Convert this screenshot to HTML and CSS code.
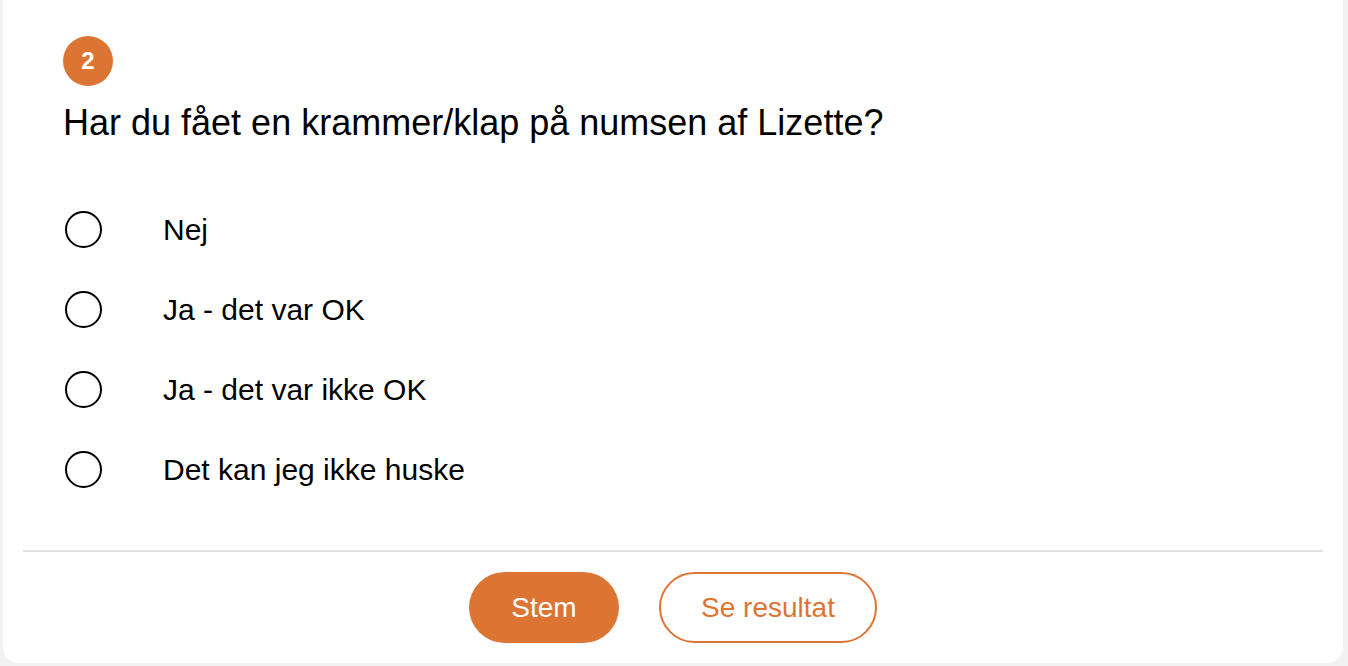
FILE: index.html
```html
<!DOCTYPE html>
<html lang="da">
<head>
  <meta charset="UTF-8">
  <meta name="viewport" content="width=device-width, initial-scale=1.0">
  <title>Afstemning</title>
  <link rel="stylesheet" href="styles.css">
</head>
<body>
  <div class="poll">
    <div class="poll-body">
      <div class="nummer">2</div>
      <h2 class="spoergsmaal">Har du fået en krammer/klap på numsen af Lizette?</h2>
      <ul class="svar">
        <li><span class="radio"></span><span class="svar-tekst">Nej</span></li>
        <li><span class="radio"></span><span class="svar-tekst">Ja - det var OK</span></li>
        <li><span class="radio"></span><span class="svar-tekst">Ja - det var ikke OK</span></li>
        <li><span class="radio"></span><span class="svar-tekst">Det kan jeg ikke huske</span></li>
      </ul>
    </div>
    <div class="poll-footer">
      <button class="knap knap-fyldt">Stem</button>
      <button class="knap knap-kant">Se resultat</button>
    </div>
  </div>
</body>
</html>
```

FILE: styles.css
```css
body {
  margin: 0;
  background-color: #f2f2f2;
  font-family: "Liberation Sans", Arial, sans-serif;
  color: #000;
}

.poll {
  width: 1340px;
  margin: 0 0 3px 3px;
  background-color: #fff;
  border-radius: 0 0 16px 16px;
  padding: 0 20px;
  box-sizing: border-box;
}

.poll-body {
  padding: 36px 40px 0 40px;
  border-bottom: 2px solid #e2e2e2;
}

.nummer {
  width: 50px;
  height: 50px;
  border-radius: 50%;
  background-color: #dc7533;
  color: #fff;
  font-weight: bold;
  font-size: 24px;
  display: flex;
  align-items: center;
  justify-content: center;
}

.spoergsmaal {
  margin: 17px 0 0 0;
  font-size: 36px;
  font-weight: normal;
  line-height: 40px;
}

.svar {
  list-style: none;
  margin: 0;
  padding: 68px 0 62px 0;
  display: flex;
  flex-direction: column;
  gap: 43px;
}

.svar li {
  display: flex;
  align-items: center;
  height: 37px;
}

.radio {
  width: 33px;
  height: 33px;
  border: 2px solid #000;
  border-radius: 50%;
  margin-left: 2px;
  margin-right: 61px;
}

.svar-tekst {
  font-size: 30px;
}

.poll-footer {
  display: flex;
  justify-content: center;
  gap: 40px;
  padding: 20px 0 20px 0;
}

.knap {
  height: 71px;
  border-radius: 36px;
  font-family: "Liberation Sans", Arial, sans-serif;
  font-size: 28px;
  cursor: pointer;
}

.knap-fyldt {
  width: 150px;
  background-color: #dc7533;
  border: none;
  color: #fff;
}

.knap-kant {
  width: 218px;
  background-color: #fff;
  border: 2px solid #dc7533;
  color: #dc7533;
}
```
